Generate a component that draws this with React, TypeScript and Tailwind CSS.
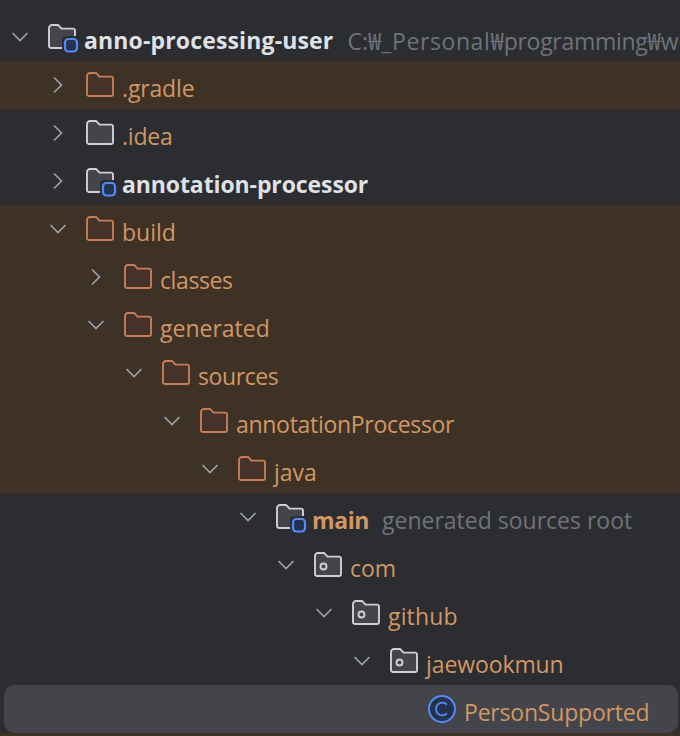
import React from "react";

type Kind = "plain" | "excluded" | "module" | "package" | "class";

function Chevron({ open }: { open: boolean }) {
  return (
    <svg width="20" height="20" viewBox="0 0 20 20" fill="none" stroke="#9da0a8" strokeWidth="1.7">
      {open ? <path d="M2.5 6 L10 13.5 L17.5 6" /> : <path d="M6 2.5 L13.5 10 L6 17.5" />}
    </svg>
  );
}

function Folder({ kind }: { kind: Kind }) {
  const excluded = kind === "excluded";
  const stroke = excluded ? "#c77d55" : "#ced0d6";
  const fill = excluded ? "#45322b" : "#43454a";
  const folder = "M1 4 A3 3 0 0 1 4 1 H9.5 A2 2 0 0 1 11 1.8 L13.5 4.6 H25 A2 2 0 0 1 27 6.6 V22 A2 2 0 0 1 25 24 H3 A2 2 0 0 1 1 22 Z";
  return (
    <svg width="31" height="34" viewBox="0 0 31 34" fill="none" className="shrink-0">
      <g transform="translate(0 4)">
        <path d={folder} fill={fill} stroke={stroke} strokeWidth="1.9" />
        {kind === "package" && <circle cx="9.5" cy="14.5" r="3" fill="none" stroke={stroke} strokeWidth="1.9" />}
      </g>
      {kind === "module" && (
        <>
          <rect x="14" y="16" width="17" height="17" rx="4" fill="#2b2d30" />
          <rect x="17" y="19" width="12" height="12.5" rx="3.5" fill="#25324d" stroke="#548af7" strokeWidth="2.2" />
        </>
      )}
    </svg>
  );
}

function ClassIcon() {
  return (
    <svg width="28" height="28" viewBox="0 0 28 28" fill="none">
      <circle cx="14" cy="14" r="13" fill="#25324d" stroke="#548af7" strokeWidth="2" />
      <path d="M19 9.6 A6.4 6.4 0 1 0 19 18.4" stroke="#548af7" strokeWidth="1.8" />
    </svg>
  );
}

function Won() {
  return <span className="font-['Noto_Sans_CJK_KR'] text-[24px]">₩</span>;
}

const rows: {
  depth: number;
  label: string;
  kind: Kind;
  open?: boolean;
  bold?: "white" | "orange";
  note?: React.ReactNode;
  noteGap?: string;
  band?: boolean;
  track?: string;
}[] = [
  {
    depth: 0,
    label: "anno-processing-user",
    kind: "module",
    open: true,
    bold: "white",
    track: "tracking-[0.15px]",
    noteGap: "ml-[14px]",
    note: (
      <>
        C:<Won />
        <span className="tracking-[0.6px]">_Personal</span>
        <Won />
        <span className="tracking-[-0.3px]">programming</span>
        <Won />
        workspace
      </>
    ),
  },
  { depth: 1, label: ".gradle", kind: "excluded", open: false, band: true, track: "tracking-[-0.15px]" },
  { depth: 1, label: ".idea", kind: "plain", open: false, track: "tracking-[-0.2px]" },
  { depth: 1, label: "annotation-processor", kind: "module", open: false, bold: "white", track: "tracking-[-0.1px]" },
  { depth: 1, label: "build", kind: "excluded", open: true, band: true },
  { depth: 2, label: "classes", kind: "excluded", open: false, band: true, track: "tracking-[-0.4px]" },
  { depth: 2, label: "generated", kind: "excluded", open: true, band: true },
  { depth: 3, label: "sources", kind: "excluded", open: true, band: true, track: "tracking-[-0.4px]" },
  { depth: 4, label: "annotationProcessor", kind: "excluded", open: true, band: true, track: "tracking-[-0.3px]" },
  { depth: 5, label: "java", kind: "excluded", open: true, band: true },
  {
    depth: 6,
    label: "main",
    kind: "module",
    open: true,
    bold: "orange",
    track: "tracking-[-0.4px]",
    noteGap: "ml-[13px]",
    note: "generated sources root",
  },
  { depth: 7, label: "com", kind: "package", open: true },
  { depth: 8, label: "github", kind: "package", open: true, track: "tracking-[0.15px]" },
  { depth: 9, label: "jaewookmun", kind: "package", open: true, track: "tracking-[-0.1px]" },
  { depth: 10, label: "PersonSupported", kind: "class", track: "tracking-[-0.2px]" },
];

function Row({ row }: { row: (typeof rows)[number] }) {
  const pad = 10 + row.depth * 38;
  const textColor = row.bold === "white" ? "text-[#dfe1e5]" : "text-[#d29763]";
  return (
    <div className={`relative flex h-12 items-center overflow-hidden whitespace-nowrap ${row.band ? "bg-[#3e3226]" : ""}`}>
      {row.kind === "class" && <div className="absolute inset-y-0 left-1 right-[2px] rounded-[10px] bg-[#43454a]" />}
      <div className="relative flex items-center" style={{ paddingLeft: pad }}>
        <div className="flex w-[38px] items-center">
          {row.open !== undefined && <Chevron open={row.open} />}
        </div>
        <div className="flex h-8 w-9 items-center">
          {row.kind === "class" ? <ClassIcon /> : <Folder kind={row.kind} />}
        </div>
        <span className={`relative top-[3px] text-[23px] leading-8 ${row.bold ? "font-bold" : "font-normal"} ${textColor} ${row.track ?? ""}`}>
          {row.label}
        </span>
        {row.note && <span className={`relative top-[3px] text-[23px] leading-8 text-[#6f737a] ${row.noteGap}`}>{row.note}</span>}
      </div>
    </div>
  );
}

export default function App() {
  return (
    <div className="h-[736px] w-[680px] overflow-hidden bg-[#2b2d30] pt-[13px] font-['Open_Sans','Noto_Sans_CJK_KR',sans-serif]">
      {rows.map((r) => (
        <Row key={r.label} row={r} />
      ))}
      <div className="h-12 bg-[#3e3226]" />
    </div>
  );
}
